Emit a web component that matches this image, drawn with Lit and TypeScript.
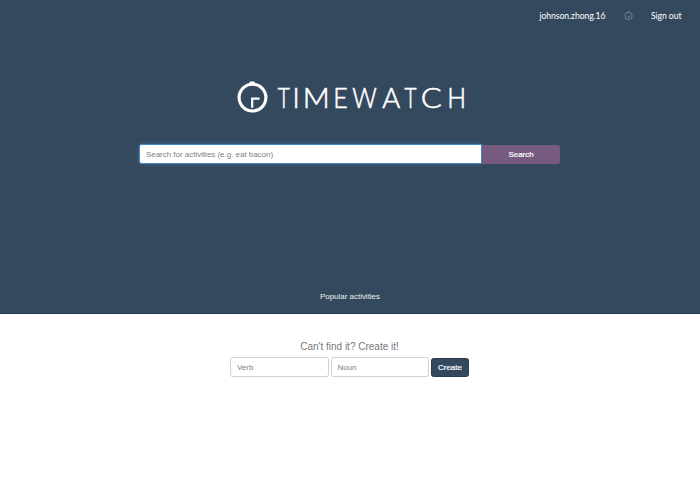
import { LitElement, html, css, svg } from "lit";
import { customElement } from "lit/decorators.js";

// Letter, left edge and advance width of the wordmark
const WORDMARK: [string, number, number][] = [
  ["T", 277.7, 12],
  ["I", 292.6, 7.2],
  ["M", 302.8, 27],
  ["E", 333.2, 14.5],
  ["W", 352.3, 24.5],
  ["A", 382.3, 18],
  ["T", 404.6, 12],
  ["C", 420.7, 21],
  ["H", 447.2, 18.8],
];

@customElement("app-root")
export class AppRoot extends LitElement {
  static styles = css`
    :host {
      display: block;
      height: 485px;
      background: #fff;
      font-family: "Liberation Sans", Arial, sans-serif;
      font-size: 7.95px;
      overflow: hidden;
    }
    * { box-sizing: border-box; }
    svg { display: block; overflow: visible; }
    .hero {
      height: 314px;
      background: #34495e;
      border-bottom: 1px solid #22384f;
      display: flex;
      flex-direction: column;
      align-items: center;
    }
    .nav {
      align-self: stretch;
      height: 32px;
      display: flex;
      justify-content: flex-end;
      align-items: center;
      padding-right: 18px;
      gap: 18px;
    }
    .logo { margin-top: 48px; margin-left: 3px; }
    .word {
      font-family: Lato, sans-serif;
      font-weight: 300;
      font-size: 28px;
      fill: #fff;
      stroke: #fff;
      stroke-width: 0.6px;
    }
    .link { font-family: Lato, sans-serif; font-weight: 400; font-size: 8.6px; fill: #fff; }
    .search {
      margin-top: 28px;
      margin-right: 1px;
      display: flex;
      width: 421px;
      height: 20px;
    }
    input {
      display: block;
      margin: 0;
      font: inherit;
      color: #555;
      background: #fff;
      outline: none;
      border: 1px solid #d0d0d0;
      border-radius: 2.5px;
      padding: 0 6px;
    }
    input::placeholder { color: #808080; opacity: 1; }
    .query {
      width: 343px;
      height: 20px;
      border-color: #4585be;
      border-radius: 2.5px 0 0 2.5px;
      box-shadow: 0 0 4px rgba(82, 150, 215, 0.4);
    }
    button {
      font: inherit;
      color: #fff;
      margin: 0;
      padding: 0;
      border: 0;
      -webkit-text-stroke: 0.2px #fff;
    }
    .go {
      position: relative;
      width: 78px;
      height: 19px;
      padding-top: 1px;
      margin-top: 0.5px;
      background: #765a80;
      border-radius: 0 2.5px 2.5px 0;
    }
    .popular { margin-top: auto; margin-bottom: 11px; line-height: 11px; color: #ecf0f1; }
    .create {
      display: flex;
      flex-direction: column;
      align-items: center;
    }
    .title { margin-top: 27px; margin-right: 1px; font-size: 10px; line-height: 12px; color: #777; }
    .row { display: flex; gap: 2px; margin-top: 4px; margin-right: 1px; }
    .field { width: 98.5px; height: 20px; }
    .add {
      width: 38px;
      height: 19px;
      margin-top: 0.5px;
      background: #34495e;
      border: 1px solid #2a3c4f;
      border-radius: 2.5px;
    }
  `;

  render() {
    return html`
      <div class="hero">
        <div class="nav">
          <svg width="67" height="14" viewBox="0 0 67 14">
            <text class="link" x="0.5" y="9.7" textLength="66">johnson.zhong.16</text>
          </svg>
          <svg width="9" height="10" viewBox="0 0 9 10" fill="none" stroke="#7c858e">
            <circle cx="4.5" cy="5" r="3.7" stroke-width="0.9" />
            <path d="M4.5 7.5V5.2H6.5M3.7 0.8H5.3" stroke-width="0.8" />
          </svg>
          <svg width="31" height="14" viewBox="0 0 31 14">
            <text class="link" x="0" y="9.7" textLength="30.5">Sign out</text>
          </svg>
        </div>
        <svg class="logo" width="231" height="36" viewBox="236 80 231 36">
          <circle cx="252.5" cy="97.6" r="13.4" fill="none" stroke="#fff" stroke-width="3.1" />
          <path d="M249.5 82.5Q249.5 81.5 250.5 81.5H254Q255 81.5 255 82.5V85H249.5Z" fill="#fff" />
          <path d="M252.2 107.8V98.7H259.5" fill="none" stroke="#fff" stroke-width="2.2" />
          ${WORDMARK.map(
            ([letter, x, width]) => svg`<text class="word" x=${x} y="108.3" textLength=${width} lengthAdjust="spacingAndGlyphs">${letter}</text>`
          )}
        </svg>
        <div class="search">
          <input class="query" placeholder="Search for activities (e.g. eat bacon)" />
          <button class="go">Search</button>
        </div>
        <div class="popular">Popular activities</div>
      </div>
      <div class="create">
        <div class="title">Can't find it? Create it!</div>
        <div class="row">
          <input class="field" placeholder="Verb" />
          <input class="field" placeholder="Noun" />
          <button class="add">Create</button>
        </div>
      </div>
    `;
  }
}
